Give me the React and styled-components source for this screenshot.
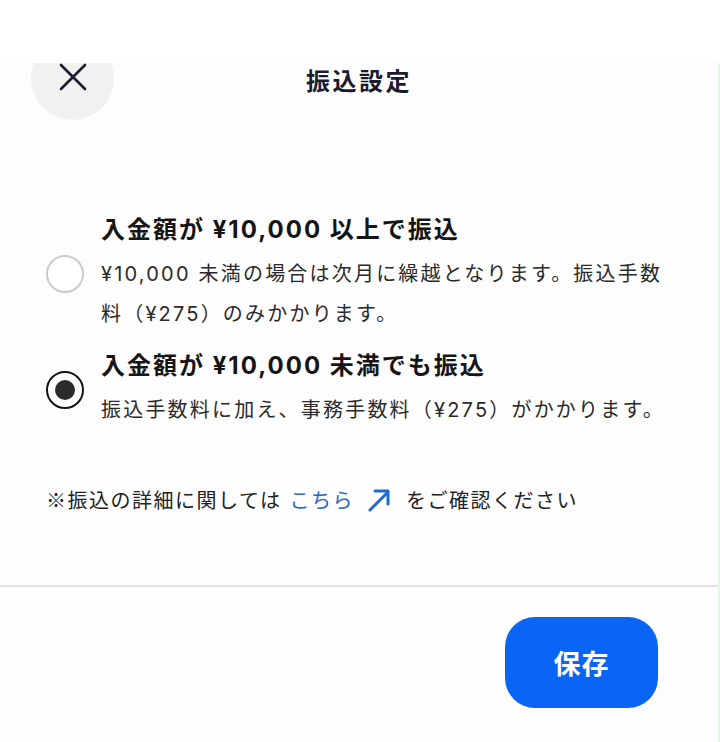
import styled, { createGlobalStyle } from 'styled-components'

const GlobalStyle = createGlobalStyle`
  html, body {
    margin: 0;
    padding: 0;
    background: #ffffff;
  }
  body {
    font-family: 'Inter', 'Noto Sans CJK JP', sans-serif;
    color: #1a1a1a;
  }
`

const Page = styled.div`
  width: 720px;
  height: 742px;
  display: flex;
  flex-direction: column;
  background: #ffffff;
  overflow: hidden;
`

const TopGap = styled.div`
  height: 63px;
  flex-shrink: 0;
  background: #ffffff;
`

const Sheet = styled.div`
  flex: 1;
  display: flex;
  flex-direction: column;
  background: #fefdfd;
  border-right: 2px solid #e9f5e9;
  overflow: hidden;
`

const Header = styled.div`
  margin-top: -26px;
  display: grid;
  grid-template-columns: 84px 1fr 84px;
  align-items: center;
  padding: 0 31px;
`

const CloseButton = styled.button`
  width: 83px;
  height: 83px;
  border-radius: 50%;
  border: none;
  background: #f3f1f0;
  display: flex;
  align-items: center;
  justify-content: center;
  padding: 0;
  padding-bottom: 3px;
  cursor: pointer;
`

const Title = styled.h1`
  margin: 0;
  margin-top: 1px;
  text-align: center;
  font-size: 24px;
  font-weight: 700;
  letter-spacing: 2.5px;
  color: #1b1b2e;
`

const Options = styled.div`
  margin-top: 94px;
  padding: 0 46px;
  display: flex;
  flex-direction: column;
  gap: 16px;
`

const Option = styled.label`
  display: flex;
  align-items: center;
  gap: 17px;
  cursor: pointer;
`

const Radio = styled.span`
  flex-shrink: 0;
  width: 38px;
  height: 38px;
  box-sizing: border-box;
  border-radius: 50%;
  border: ${(p) => (p.checked ? '2.5px solid #141414' : '2px solid #cbcbcb')};
  background: #ffffff;
  display: flex;
  align-items: center;
  justify-content: center;

  &::after {
    content: '';
    display: ${(p) => (p.checked ? 'block' : 'none')};
    width: 20px;
    height: 20px;
    border-radius: 50%;
    background: #2b2b2b;
  }
`

const OptionText = styled.div`
  display: flex;
  flex-direction: column;
  gap: 8px;
`

const OptionTitle = styled.div`
  font-size: 24px;
  line-height: 32px;
  font-weight: 700;
  letter-spacing: 2px;
  color: #151515;
`

const OptionDesc = styled.div`
  font-size: 20px;
  line-height: 40px;
  letter-spacing: 2.2px;
  color: #2a2a2a;
`

const Note = styled.p`
  margin: 55px 0 0;
  padding: 0 46px;
  font-family: 'Noto Sans CJK JP', sans-serif;
  font-size: 20px;
  line-height: 30px;
  letter-spacing: 1.5px;
  color: #222222;
  display: flex;
  align-items: center;
  white-space: nowrap;
`

const Link = styled.a`
  color: #2468c6;
  text-decoration: none;
  margin-left: 8px;
  display: inline-flex;
  align-items: center;
  gap: 12px;
`

const After = styled.span`
  margin-left: 14px;
`

const Divider = styled.hr`
  margin: 70px 0 0;
  border: none;
  border-top: 2px solid #e4e4e4;
`

const Footer = styled.div`
  display: flex;
  justify-content: flex-end;
  padding: 30px 60px 0;
`

const SaveButton = styled.button`
  width: 153px;
  height: 91px;
  border: none;
  border-radius: 30px;
  background: #0966f4;
  color: #ffffff;
  font-family: 'Inter', 'Noto Sans CJK JP', sans-serif;
  font-size: 27px;
  font-weight: 600;
  letter-spacing: 1px;
  cursor: pointer;
`

const options = [
  {
    title: '入金額が ¥10,000 以上で振込',
    desc: ['¥10,000 未満の場合は次月に繰越となります。振込手数', '料（¥275）のみかかります。'],
    checked: false,
  },
  {
    title: '入金額が ¥10,000 未満でも振込',
    desc: ['振込手数料に加え、事務手数料（¥275）がかかります。'],
    checked: true,
  },
]

const App = () => {
  return (
    <Page>
      <GlobalStyle />
      <TopGap />
      <Sheet>
        <Header>
          <CloseButton aria-label='閉じる'>
            <svg width='28' height='28' viewBox='0 0 28 28' fill='none'>
              <path
                d='M2 2L26 26M26 2L2 26'
                stroke='#1c1c30'
                strokeWidth='2.6'
                strokeLinecap='round'
              />
            </svg>
          </CloseButton>
          <Title>振込設定</Title>
          <div />
        </Header>

        <Options>
          {options.map((o) => (
            <Option key={o.title}>
              <Radio checked={o.checked} />
              <OptionText>
                <OptionTitle>{o.title}</OptionTitle>
                <OptionDesc>
                  {o.desc.map((line) => (
                    <div key={line}>{line}</div>
                  ))}
                </OptionDesc>
              </OptionText>
            </Option>
          ))}
        </Options>

        <Note>
          ※振込の詳細に関しては
          <Link href='#'>
            こちら
            <svg width='26' height='26' viewBox='0 0 26 26' fill='none'>
              <path
                d='M4 23L22 5M9 4H22V17'
                stroke='#1f68d6'
                strokeWidth='3'
                strokeLinecap='round'
                strokeLinejoin='round'
              />
            </svg>
          </Link>
          <After>をご確認ください</After>
        </Note>

        <Divider />

        <Footer>
          <SaveButton>保存</SaveButton>
        </Footer>
      </Sheet>
    </Page>
  )
}

export default App
